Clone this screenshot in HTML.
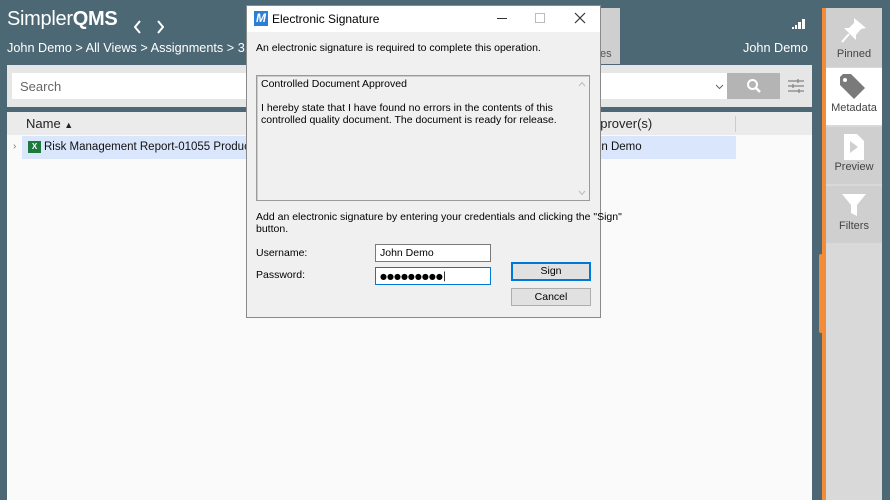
<!DOCTYPE html>
<html><head><style>
*{margin:0;padding:0;box-sizing:border-box}
body{width:890px;height:500px;background:#4d6875;font-family:"Liberation Sans",sans-serif;position:relative;overflow:hidden}
.a{position:absolute}
.t{font-family:"Liberation Sans",sans-serif}
</style></head><body>
<div class="a" style="left:7px;top:8px;color:#fff;font-size:20px;letter-spacing:-0.3px">Simpler<b>QMS</b></div>
<svg class="a" style="left:134px;top:20px" width="30" height="14"><path d="M6 1 L1 7 L6 13 M24 1 L29 7 L24 13" stroke="#fff" stroke-width="2" fill="none"/></svg>
<div class="a" style="left:7px;top:41px;color:#fff;font-size:12.7px">John Demo &gt; All Views &gt; Assignments &gt; 3. .</div>
<div class="a" style="left:743px;top:41px;color:#fff;font-size:12.7px">John Demo</div>
<svg class="a" style="left:792px;top:18px" width="14" height="12"><rect x="0" y="9" width="2" height="2" fill="#fff"/><rect x="3" y="7" width="2" height="4" fill="#fff"/><rect x="6" y="4" width="3" height="7" fill="#fff"/><rect x="10" y="1" width="3" height="10" fill="#fff"/></svg>
<div class="a" style="left:600px;top:8px;width:20px;height:56px;background:#cfcfcf;font-size:11px;color:#555;padding-top:40px">es</div>
<div class="a" style="left:7px;top:65px;width:805px;height:42px;background:#e6e6e6"></div>
<div class="a" style="left:12px;top:73px;width:716px;height:26px;background:#fff;font-size:13px;color:#666;padding:6px 8px">Search</div>
<svg class="a" style="left:715px;top:84px" width="9" height="6"><path d="M1 1 L4.5 4.5 L8 1" stroke="#666" fill="none"/></svg>
<div class="a" style="left:727px;top:73px;width:53px;height:26px;background:#b4b4b4"></div>
<svg class="a" style="left:746px;top:78px" width="16" height="16"><circle cx="6.5" cy="6.5" r="4.5" stroke="#fff" stroke-width="2" fill="none"/><line x1="10" y1="10" x2="14" y2="14" stroke="#fff" stroke-width="2.5"/></svg>
<svg class="a" style="left:787px;top:78px" width="18" height="16"><g stroke="#888" stroke-width="1.3"><line x1="1" y1="3" x2="17" y2="3"/><line x1="1" y1="8" x2="17" y2="8"/><line x1="1" y1="13" x2="17" y2="13"/><line x1="11" y1="1" x2="11" y2="5"/><line x1="6" y1="6" x2="6" y2="10"/><line x1="12" y1="11" x2="12" y2="15"/></g></svg>
<div class="a" style="left:7px;top:112px;width:805px;height:388px;background:#fafafa"></div>
<div class="a" style="left:7px;top:112px;width:805px;height:23px;background:#ebebeb"></div>
<div class="a" style="left:26px;top:116px;font-size:13px;color:#222">Name <span style="font-size:9px">&#9650;</span></div>
<div class="a" style="left:593px;top:116px;font-size:13px;color:#222">pprover(s)</div>
<div class="a" style="left:735px;top:116px;width:1px;height:16px;background:#ccc"></div>
<div class="a" style="left:22px;top:136px;width:714px;height:23px;background:#d9e6fb"></div>
<div class="a" style="left:13px;top:141px;font-size:10px;color:#777">&#8250;</div>
<div class="a" style="left:28px;top:141px;width:13px;height:12px;background:#1e7a3c;color:#fff;font-size:8px;font-weight:bold;text-align:center;line-height:12px">X</div>
<div class="a t" style="left:44px;top:141px;font-size:11.5px;color:#111">Risk Management Report-01055 Product X1</div>
<div class="a t" style="left:595px;top:141px;font-size:11.5px;color:#111">hn Demo</div>
<div class="a" style="left:822px;top:8px;width:4px;height:492px;background:#f28c38"></div>
<div class="a" style="left:819px;top:254px;width:4px;height:79px;background:#f28c38;border-radius:2px"></div>
<div class="a" style="left:826px;top:8px;width:56px;height:492px;background:#d9d9d9"></div>
<div class="a" style="left:826px;top:8px;width:56px;height:59px;background:#cfcfcf;font-size:11px;color:#444;text-align:center;padding-top:40px">Pinned</div>
<div class="a" style="left:826px;top:68px;width:56px;height:57px;background:#fff;font-size:11px;color:#444;text-align:center;padding-top:34px">Metadata</div>
<div class="a" style="left:826px;top:127px;width:56px;height:57px;background:#cfcfcf;font-size:11px;color:#444;text-align:center;padding-top:34px">Preview</div>
<div class="a" style="left:826px;top:186px;width:56px;height:57px;background:#cfcfcf;font-size:11px;color:#444;text-align:center;padding-top:34px">Filters</div>
<svg class="a" style="left:840px;top:16px" width="30" height="28"><path d="M14 2 L26 12 L21 13 L16 19 L16 24 L4 12 L9 12 L14 7Z" fill="#fff"/><line x1="9" y1="18" x2="2" y2="26" stroke="#fff" stroke-width="2"/></svg>
<svg class="a" style="left:838px;top:73px" width="30" height="28"><path d="M2 4 L2 12 L16 26 L27 15 L13 1 L5 1Z" fill="#7a7a7a"/><circle cx="7" cy="7" r="2" fill="#fff"/></svg>
<svg class="a" style="left:842px;top:133px" width="24" height="28"><path d="M2 1 H15 L22 8 V27 H2Z" fill="#fff"/><path d="M8 8 L16 14 L8 20Z" fill="#cfcfcf"/></svg>
<svg class="a" style="left:841px;top:193px" width="26" height="24"><path d="M1 1 H25 L16 12 V23 L10 20 V12Z" fill="#fff"/></svg>
<!-- dialog -->
<div class="a" style="left:246px;top:5px;width:355px;height:313px;background:#f0f0f0;border:1px solid #8a8a8a"></div>
<div class="a" style="left:247px;top:6px;width:353px;height:26px;background:#fff"></div>
<div class="a" style="left:254px;top:11px;width:14px;height:15px;background:#2a7fd4;color:#fff;font-size:12px;font-weight:bold;font-style:italic;text-align:center;line-height:15px">M</div>
<div class="a t" style="left:272px;top:12px;font-size:12px;color:#000">Electronic Signature</div>
<div class="a" style="left:497px;top:18px;width:10px;height:1px;background:#333"></div>
<div class="a" style="left:535px;top:13px;width:10px;height:10px;border:1px solid #bbb"></div>
<svg class="a" style="left:574px;top:12px" width="12" height="12"><path d="M1 1 L11 11 M11 1 L1 11" stroke="#333" stroke-width="1.2"/></svg>
<div class="a t" style="left:256px;top:42px;font-size:10.5px;color:#000">An electronic signature is required to complete this operation.</div>
<div class="a" style="left:256px;top:75px;width:334px;height:126px;background:#f0f0f0;border:1px solid #9a9a9a;box-shadow:inset 1px 1px 0 #ccc"></div>
<div class="a t" style="left:261px;top:78px;font-size:10.5px;color:#000;line-height:12px">Controlled Document Approved<br><br>I hereby state that I have found no errors in the contents of this<br>controlled quality document. The document is ready for release.</div>
<svg class="a" style="left:578px;top:81px" width="8" height="6"><path d="M1 5 L4 1.5 L7 5" stroke="#bbb" fill="none"/></svg>
<svg class="a" style="left:578px;top:190px" width="8" height="6"><path d="M1 1 L4 4.5 L7 1" stroke="#bbb" fill="none"/></svg>
<div class="a t" style="left:256px;top:211px;font-size:10.5px;color:#000;line-height:12px">Add an electronic signature by entering your credentials and clicking the "Sign"<br>button.</div>
<div class="a t" style="left:256px;top:247px;font-size:10.5px;color:#000">Username:</div>
<div class="a t" style="left:256px;top:269px;font-size:10.5px;color:#000">Password:</div>
<div class="a t" style="left:375px;top:244px;width:116px;height:18px;background:#fff;border:1px solid #7a7a7a;font-size:10.5px;padding:2px 4px">John Demo</div>
<div class="a" style="left:375px;top:267px;width:116px;height:18px;background:#fff;border:1px solid #0078d7;font-size:8px;padding:3px 4px;letter-spacing:0px;font-family:'DejaVu Sans',sans-serif">&#9679;&#9679;&#9679;&#9679;&#9679;&#9679;&#9679;&#9679;&#9679;<span style="font-size:10px">|</span></div>
<div class="a t" style="left:511px;top:262px;width:80px;height:19px;background:#e1e1e1;border:2px solid #0078d7;font-size:10.5px;text-align:center;line-height:15px">Sign</div>
<div class="a t" style="left:511px;top:288px;width:80px;height:18px;background:#e1e1e1;border:1px solid #adadad;font-size:10.5px;text-align:center;line-height:16px">Cancel</div>
</body></html>
